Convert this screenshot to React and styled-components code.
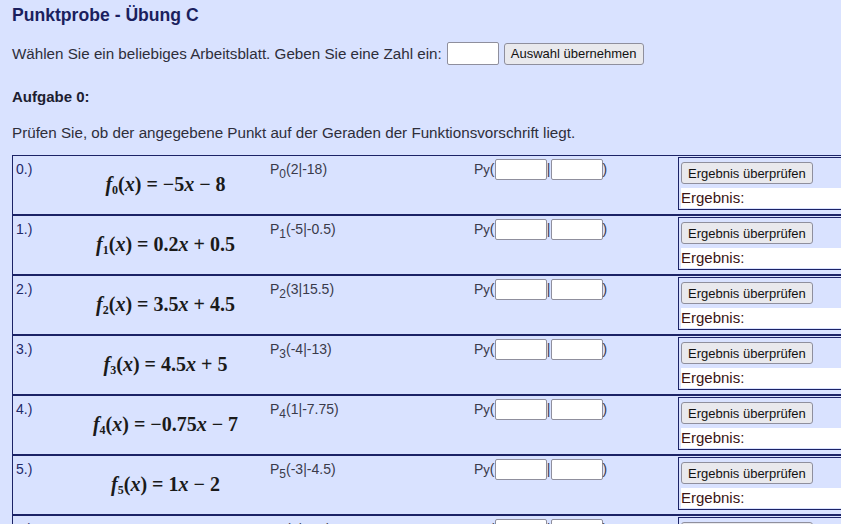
import styled, { createGlobalStyle } from "styled-components";

const GlobalStyle = createGlobalStyle`
  html, body {
    margin: 0;
    padding: 0;
    overflow: hidden;
    background: #d9e2ff;
  }
  body {
    font-family: "Liberation Sans", Arial, sans-serif;
    font-size: 15px;
    color: #2e2e3a;
  }
`;

const Page = styled.div`
  padding: 5px 0 0 12px;
  width: 960px;
`;

const Title = styled.h1`
  margin: 0;
  font-size: 17.6px;
  font-weight: bold;
  color: #1b1f5e;
  line-height: 20px;
`;

const Line = styled.p`
  margin: ${(p) => p.$top || 0}px 0 0 0;
  font-size: 15.2px;
  line-height: 20px;
  display: flex;
  align-items: center;
`;

const Bold = styled.p`
  margin: 22px 0 0 0;
  font-weight: bold;
  line-height: 20px;
  color: #1d1d30;
`;

const NumberInput = styled.input`
  width: 52px;
  height: ${(p) => p.$h || 23}px;
  box-sizing: border-box;
  border: 1px solid #8f8f9d;
  border-radius: 2px;
  background: #fff;
  margin: 0 0 0 ${(p) => p.$ml || 0}px;
  padding: 0;
`;

const Button = styled.button`
  font-family: "Liberation Sans", Arial, sans-serif;
  font-size: 13px;
  color: #111;
  background: #e9e9ed;
  border: 1px solid #8f8f9d;
  border-radius: 3px;
  height: 22px;
  padding: 0 6px;
  margin-left: ${(p) => p.$ml || 0}px;
`;

const Table = styled.div`
  margin-top: 12px;
`;

const Row = styled.div`
  display: grid;
  grid-template-columns: 52px 201px 204px 204px 1fr;
  height: 58px;
  border: 1px solid #1c2366;
  border-right: none;
  & + & {
    border-top: 2px solid #1c2366;
    margin-top: -1px;
  }
`;

const Num = styled.div`
  padding: 5px 0 0 3px;
  color: #1f2a6a;
  font-size: 14px;
`;

const Formula = styled.div`
  align-self: center;
  justify-self: center;
  font-family: "Liberation Serif", "Times New Roman", serif;
  font-weight: bold;
  font-size: 20px;
  color: #1a1a1a;
  white-space: nowrap;
  i {
    font-style: italic;
  }
  sub {
    font-size: 12px;
    vertical-align: -3px;
  }
`;

const Op = styled.span`
  margin: 0 5px;
`;

const Point = styled.div`
  padding: 5px 0 0 4px;
  font-size: 14px;
  color: #3a3a4a;
  sub {
    font-size: 12px;
    vertical-align: -4px;
  }
`;

const Answer = styled.div`
  padding: 3px 0 0 4px;
  display: flex;
  align-items: flex-start;
  font-size: 14px;
  color: #3a3a4a;
  line-height: 21px;
  sub {
    font-size: 13px;
    vertical-align: -4px;
  }
`;

const Bar = styled.span`
  display: inline-block;
  width: 4px;
  text-align: center;
`;

const ResultBox = styled.div`
  margin: 1px 0 0 4px;
  height: 53px;
  border: 1px solid #1c2366;
  border-right: none;
  padding: 4px 0 0 2px;
  box-sizing: border-box;
  display: flex;
  flex-direction: column;
  align-items: flex-start;
  gap: 4px;
  background: #d9e2ff;
`;

const ResultText = styled.div`
  align-self: stretch;
  background: #fff;
  color: #3a1414;
  font-size: 15px;
  line-height: 20px;
`;

const tasks = [
  { m: "−5", b: ["−", "8"], p: "2|-18" },
  { m: "0.2", b: ["+", "0.5"], p: "-5|-0.5" },
  { m: "3.5", b: ["+", "4.5"], p: "3|15.5" },
  { m: "4.5", b: ["+", "5"], p: "-4|-13" },
  { m: "−0.75", b: ["−", "7"], p: "1|-7.75" },
  { m: "1", b: ["−", "2"], p: "-3|-4.5" },
  { m: "2", b: ["−", "5.5"], p: "1|-3.5" },
];

function App() {
  return (
    <>
      <GlobalStyle />
      <Page>
        <Title>Punktprobe - Übung C</Title>
        <Line $top={17}>
          Wählen Sie ein beliebiges Arbeitsblatt. Geben Sie eine Zahl ein:
          <NumberInput type="text" $ml={5} />
          <Button $ml={5}>Auswahl übernehmen</Button>
        </Line>
        <Bold>Aufgabe 0:</Bold>
        <Line $top={16}>
          Prüfen Sie, ob der angegebene Punkt auf der Geraden der Funktionsvorschrift liegt.
        </Line>
        <Table>
          {tasks.map((t, i) => (
            <Row key={i}>
              <Num>{i}.)</Num>
              <Formula>
                <i>f</i>
                <sub>{i}</sub>(<i>x</i>)<Op>=</Op>
                {t.m}
                <i>x</i>
                <Op>{t.b[0]}</Op>
                {t.b[1]}
              </Formula>
              <Point>
                P<sub>{i}</sub>({t.p})
              </Point>
              <Answer>
                P<sub>y</sub>(
                <NumberInput type="text" $h={21} />
                <Bar>|</Bar>
                <NumberInput type="text" $h={21} />)
              </Answer>
              <ResultBox>
                <Button>Ergebnis überprüfen</Button>
                <ResultText>Ergebnis:</ResultText>
              </ResultBox>
            </Row>
          ))}
        </Table>
      </Page>
    </>
  );
}

export default App;
